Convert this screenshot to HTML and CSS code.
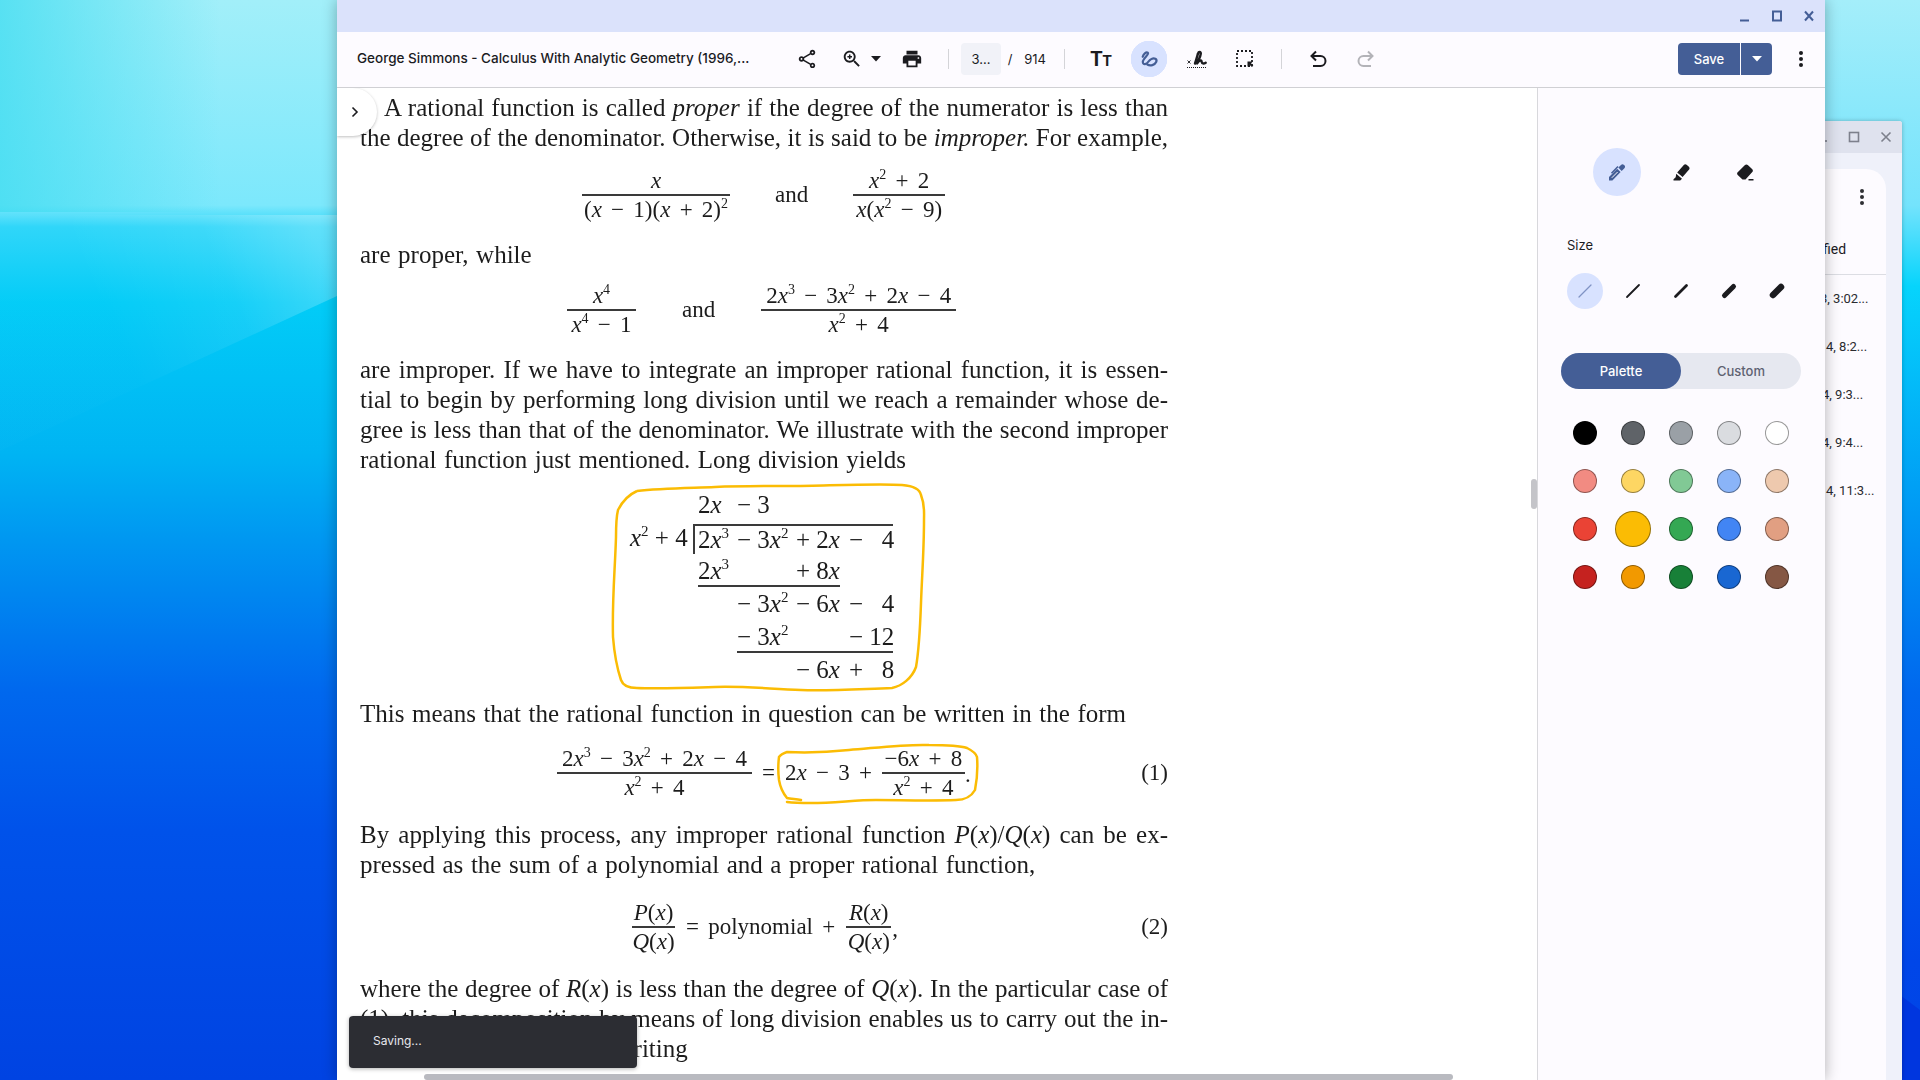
FILE: index.html
```html
<!DOCTYPE html>
<html lang="en">
<head>
  <meta charset="UTF-8" />
  <title>George Simmons - Calculus With Analytic Geometry</title>
  <link rel="stylesheet" href="styles.css">
</head>
<body>

<svg class="wallpaper" viewBox="0 0 1920 1080" width="1920" height="1080">
  <defs>
    <linearGradient id="wp-left" gradientUnits="userSpaceOnUse" x1="0" y1="0" x2="0" y2="1080">
      <stop offset="0" stop-color="#a2eff9"/>
      <stop offset=".19" stop-color="#7ce8fc"/>
      <stop offset=".21" stop-color="#2ed6f9"/>
      <stop offset=".28" stop-color="#02ccf7"/>
      <stop offset=".42" stop-color="#00b4f3"/>
      <stop offset=".50" stop-color="#0097f1"/>
      <stop offset=".64" stop-color="#0068ee"/>
      <stop offset=".77" stop-color="#0052ea"/>
      <stop offset="1" stop-color="#0043e2"/>
    </linearGradient>
    <linearGradient id="wp-fade" gradientUnits="userSpaceOnUse" x1="0" y1="0" x2="220" y2="0">
      <stop offset="0" stop-color="#3fdcf0" stop-opacity=".75"/>
      <stop offset="1" stop-color="#3fdcf0" stop-opacity="0"/>
    </linearGradient>
    <linearGradient id="wp-band" gradientUnits="userSpaceOnUse" x1="120" y1="340" x2="320" y2="250">
      <stop offset="0" stop-color="#fff" stop-opacity=".01"/>
      <stop offset=".55" stop-color="#fff" stop-opacity=".08"/>
      <stop offset="1" stop-color="#fff" stop-opacity=".24"/>
    </linearGradient>
    <linearGradient id="wp-right" gradientUnits="userSpaceOnUse" x1="0" y1="0" x2="0" y2="1080">
      <stop offset="0" stop-color="#a4eefa"/>
      <stop offset=".19" stop-color="#74e3fc"/>
      <stop offset=".265" stop-color="#06d4fc"/>
      <stop offset=".45" stop-color="#00a0f5"/>
      <stop offset=".64" stop-color="#0068ee"/>
      <stop offset=".89" stop-color="#0046e8"/>
      <stop offset="1" stop-color="#0044e6"/>
    </linearGradient>
  </defs>
  <rect width="1920" height="1080" fill="url(#wp-left)"/>
  <rect width="220" height="212" fill="url(#wp-fade)"/>
  <polygon points="0,215 337,215 337,296 0,451" fill="url(#wp-band)"/>
  <rect x="1825" width="95" height="1080" fill="url(#wp-right)"/>
  <polygon points="1880,980 1920,1010 1920,1080 1880,1080" fill="#0036df"/>
</svg>

<!-- window behind -->
<div class="back-window">
  <div class="back-titlebar">
    <span class="back-ctl"><svg width="12" height="12" viewBox="0 0 12 12"><path d="M1 10h10" class="back-stroke"/></svg></span>
    <span class="back-ctl"><svg width="12" height="12" viewBox="0 0 12 12"><rect x="1.5" y="1.5" width="9" height="9" class="back-stroke"/></svg></span>
    <span class="back-ctl"><svg width="12" height="12" viewBox="0 0 12 12"><path d="M1.5 1.5l9 9M10.5 1.5l-9 9" class="back-stroke"/></svg></span>
  </div>
  <div class="back-card">
    <div class="back-menu">
      <svg width="24" height="24" viewBox="0 0 24 24" fill="#2e2f33"><circle cx="12" cy="6" r="2"/><circle cx="12" cy="12" r="2"/><circle cx="12" cy="18" r="2"/></svg>
    </div>
    <div class="back-head">Last modified</div>
    <div class="back-row cut-more">3, 3:02...</div>
    <div class="back-row">4, 8:2...</div>
    <div class="back-row cut">4, 9:3...</div>
    <div class="back-row cut">4, 9:4...</div>
    <div class="back-row">4, 11:3...</div>
  </div>
</div>

<div class="window">
  <div class="titlebar">
    <span class="win-ctl"><svg width="12" height="12" viewBox="0 0 12 12"><path d="M1 10.5h9" class="win-stroke"/></svg></span>
    <span class="win-ctl"><svg width="12" height="12" viewBox="0 0 12 12"><rect x="2" y="1.5" width="8" height="9" class="win-stroke"/></svg></span>
    <span class="win-ctl"><svg width="12" height="12" viewBox="0 0 12 12"><path d="M2 1.5l8 9M10 1.5l-8 9" class="win-stroke"/></svg></span>
  </div>

  <div class="toolbar">
    <div class="doc-title">George Simmons - Calculus With Analytic Geometry (1996,...</div>

    <span class="tool">
      <svg width="22" height="22" viewBox="0 0 24 24"><path d="M18 16.08c-.76 0-1.44.3-1.96.77L8.91 12.7c.05-.23.09-.46.09-.7s-.04-.47-.09-.7l7.05-4.11c.54.5 1.25.81 2.04.81 1.66 0 3-1.34 3-3s-1.34-3-3-3-3 1.34-3 3c0 .24.04.47.09.7L8.04 9.81C7.5 9.31 6.79 9 6 9c-1.66 0-3 1.34-3 3s1.34 3 3 3c.79 0 1.5-.31 2.04-.81l7.12 4.16c-.05.21-.08.43-.08.65 0 1.61 1.31 2.92 2.92 2.92s2.92-1.31 2.92-2.92-1.31-2.92-2.92-2.92zM18 4c.55 0 1 .45 1 1s-.45 1-1 1-1-.45-1-1 .45-1 1-1zM6 13c-.55 0-1-.45-1-1s.45-1 1-1 1 .45 1 1-.45 1-1 1zm12 7.02c-.55 0-1-.45-1-1s.45-1 1-1 1 .45 1 1-.45 1-1 1z" fill="#1b1b1f"/></svg>
    </span>
    <span class="zoom-group">
      <svg width="22" height="22" viewBox="0 0 24 24"><path d="M15.5 14h-.79l-.28-.27C15.41 12.59 16 11.11 16 9.5 16 5.91 13.09 3 9.5 3S3 5.91 3 9.5 5.91 16 9.5 16c1.61 0 3.09-.59 4.23-1.57l.27.28v.79l5 4.99L20.49 19l-4.99-5zm-6 0C7.01 14 5 11.99 5 9.5S7.01 5 9.5 5 14 7.01 14 9.5 11.99 14 9.5 14zM12 10.3h-1.7V12H8.7v-1.7H7V8.7h1.7V7h1.6v1.7H12z" fill="#1b1b1f"/></svg>
      <svg class="caret" width="10" height="6" viewBox="0 0 10 6"><path d="M0 0h10L5 5.5z" fill="#1b1b1f"/></svg>
    </span>
    <span class="tool">
      <svg width="22" height="22" viewBox="0 0 24 24"><path d="M19 8H5c-1.66 0-3 1.34-3 3v6h4v4h12v-4h4v-6c0-1.66-1.34-3-3-3zm-3 11H8v-5h8v5zm3-7c-.55 0-1-.45-1-1s.45-1 1-1 1 .45 1 1-.45 1-1 1zm-1-9H6v4h12V3z" fill="#1b1b1f"/></svg>
    </span>

    <span class="divider"></span>
    <span class="page-input">3...</span>
    <span class="page-slash">/</span>
    <span class="page-total">914</span>
    <span class="divider"></span>

    <span class="tool text-tool"><span class="tt-big">T</span><span class="tt-small">T</span></span>
    <span class="tool active">
      <svg width="24" height="24" viewBox="0 0 24 24" fill="none"><path d="M5.7 9.8C6.5 7 9 4.8 10.8 5.7c1.800 1.200-5.300 6.300-5 9.300.3 3.300 3.700 2.500 5.700-.5 1.500-2.200 4.500-3.800 6.800-2.700 2.500 1.300.8 5.300-3 6.300-1.800.5-3.700.2-5-.6" stroke="#445e96" stroke-width="2.200" stroke-linecap="round" stroke-linejoin="round"/></svg>
    </span>
    <span class="tool">
      <svg width="24" height="24" viewBox="0 0 24 24" fill="none"><path d="M10 16.500C11.500 12 12.500 8 13 6.500c.6-2 3-2 2.800.2-.2 3-2.500 6.500-3.800 9.800M12.500 16c1-2 3.500-3.500 4-1.800.3 1.200.1 2.300 1.800 2.300 1 0 1.700-.3 2.400-.8" stroke="#1b1b1f" stroke-width="2.400" stroke-linecap="round" stroke-linejoin="round"/><path d="M2.500 13.500l3 3M5.500 13.500l-3 3" stroke="#1b1b1f" stroke-width=".9"/><path d="M2 20.500h19" stroke="#1b1b1f" stroke-width="1" stroke-dasharray="1 1"/></svg>
    </span>
    <span class="tool">
      <svg width="24" height="24" viewBox="0 0 24 24" fill="none"><rect x="4" y="4" width="15" height="15" stroke="#1b1b1f" stroke-width="1.8" stroke-dasharray="2 2"/><path d="M14.5 14.5H20l-2 1.800 2.300 2.400-1.400 1.400-2.400-2.300-2 2z" fill="#1b1b1f"/></svg>
    </span>

    <span class="divider"></span>

    <span class="tool">
      <svg width="24" height="24" viewBox="0 0 24 24" fill="none"><path d="M10 4.5 5.500 9l4.500 4.500M6 9h8.500a5 5 0 0 1 0 10H7" stroke="#1b1b1f" stroke-width="2"/></svg>
    </span>
    <span class="tool">
      <svg width="24" height="24" viewBox="0 0 24 24" fill="none"><path d="M14 4.5 18.500 9 14 13.500M18 9H9.500a5 5 0 0 0 0 10H17" stroke="#b3b3b8" stroke-width="2"/></svg>
    </span>

    <div class="save-group">
      <span class="save-btn">Save</span>
      <span class="save-arrow"><svg width="10" height="6" viewBox="0 0 10 6"><path d="M0 0h10L5 5.5z" fill="#fff"/></svg></span>
    </div>
    <span class="kebab">
      <svg width="24" height="24" viewBox="0 0 24 24" fill="#1b1b1f"><circle cx="12" cy="6" r="2"/><circle cx="12" cy="12" r="2"/><circle cx="12" cy="18" r="2"/></svg>
    </span>
  </div>

  <div class="viewer">
    <div class="doc-area">
      <div class="doc">
        <div class="ln just first">A rational function is called <i>proper</i> if the degree of the numerator is less than</div>
        <div class="ln just">the degree of the denominator. Otherwise, it is said to be <i>improper.</i> For example,</div>

        <div class="eq eq-a">
          <span class="frac w148"><span class="num"><i>x</i></span><span class="den">(<i>x</i> − 1)(<i>x</i> + 2)<sup>2</sup></span></span>
          <span class="word">and</span>
          <span class="frac w92"><span class="num"><i>x</i><sup>2</sup> + 2</span><span class="den"><i>x</i>(<i>x</i><sup>2</sup> − 9)</span></span>
        </div>

        <div class="ln">are proper, while</div>

        <div class="eq eq-b">
          <span class="frac w69"><span class="num"><i>x</i><sup>4</sup></span><span class="den"><i>x</i><sup>4</sup> − 1</span></span>
          <span class="word">and</span>
          <span class="frac w195"><span class="num">2<i>x</i><sup>3</sup> − 3<i>x</i><sup>2</sup> + 2<i>x</i> − 4</span><span class="den"><i>x</i><sup>2</sup> + 4</span></span>
        </div>

        <div class="ln just gap5">are improper. If we have to integrate an improper rational function, it is essen-</div>
        <div class="ln just">tial to begin by performing long division until we reach a remainder whose de-</div>
        <div class="ln just">gree is less than that of the denominator. We illustrate with the second improper</div>
        <div class="ln">rational function just mentioned. Long division yields</div>

        <div class="division">
          <span class="d-cell c2">2<i>x</i></span><span class="d-cell c3">− 3</span>
          <span class="d-cell c1 r2"><i>x</i><sup>2</sup> + 4</span>
          <span class="d-cell c2 r2 over first-over">2<i>x</i><sup>3</sup></span><span class="d-cell c3 r2 over">− 3<i>x</i><sup>2</sup></span><span class="d-cell c4 r2 over">+ 2<i>x</i></span><span class="d-cell c5 r2 over">− &nbsp;&nbsp;4</span>
          <span class="d-cell c2 r3 under">2<i>x</i><sup>3</sup></span><span class="d-cell c3 r3 under"></span><span class="d-cell c4 r3 under short">+ 8<i>x</i></span>
          <span class="d-cell c3 r4">− 3<i>x</i><sup>2</sup></span><span class="d-cell c4 r4">− 6<i>x</i></span><span class="d-cell c5 r4">− &nbsp;&nbsp;4</span>
          <span class="d-cell c3 r5 under">− 3<i>x</i><sup>2</sup></span><span class="d-cell c4 r5 under"></span><span class="d-cell c5 r5 under">− 12</span>
          <span class="d-cell c4 r6">− 6<i>x</i></span><span class="d-cell c5 r6">+ &nbsp;&nbsp;8</span>
        </div>

        <div class="ln gap10">This means that the rational function in question can be written in the form</div>

        <div class="eq eq-c">
          <span class="frac w195"><span class="num">2<i>x</i><sup>3</sup> − 3<i>x</i><sup>2</sup> + 2<i>x</i> − 4</span><span class="den"><i>x</i><sup>2</sup> + 4</span></span>
          <span class="word">=</span>
          <span class="word">2<i>x</i> − 3 +</span>
          <span class="frac w83"><span class="num">−6<i>x</i> + 8</span><span class="den"><i>x</i><sup>2</sup> + 4</span></span><span class="dot">.</span>
          <span class="eq-no">(1)</span>
        </div>

        <div class="ln just gap5">By applying this process, any improper rational function <i>P</i>(<i>x</i>)/<i>Q</i>(<i>x</i>) can be ex-</div>
        <div class="ln">pressed as the sum of a polynomial and a proper rational function,</div>

        <div class="eq eq-d gap5">
          <span class="frac w43"><span class="num"><i>P</i>(<i>x</i>)</span><span class="den"><i>Q</i>(<i>x</i>)</span></span>
          <span class="word">= polynomial +</span>
          <span class="frac w45"><span class="num"><i>R</i>(<i>x</i>)</span><span class="den"><i>Q</i>(<i>x</i>)</span></span><span class="dot">,</span>
          <span class="eq-no">(2)</span>
        </div>

        <div class="ln just gap5">where the degree of <i>R</i>(<i>x</i>) is less than the degree of <i>Q</i>(<i>x</i>). In the particular case of</div>
        <div class="ln just">(1), this decomposition by means of long division enables us to carry out the in-</div>
        <div class="ln plain">tegration of <i>P</i>(<i>x</i>)/<i>Q</i>(<i>x</i>) by writing</div>
      </div>

      <!-- highlighter marks drawn on the page -->
      <svg class="ink" viewBox="337 88 1200 992" width="1200" height="992" fill="none">
        <path d="M637 491C660 488 690 488 715 487S770 486 795 486 880 483 902 485C915 486 920 490 921 495 925 505 924 512 924 520 924 550 922 575 921 603S919 650 916 667C912 678 902 686 892 688 860 689 830 691 801 690 770 689 745 686 715 687S660 689 637 688C628 688 623 686 621 680 616 665 614 650 613 637 612 600 615 570 616 537 616 525 616 518 618 510 622 502 628 495 637 491" stroke="#fbbc04" stroke-width="2.5"/>
        <path d="M801 800C795 799 790 799 787 798 782 792 780 786 779 780 778 772 778 765 779 757 781 754 784 753 787 752 810 753 830 752 849 750 875 748 905 744 929 745 945 745 958 745 967 748 973 751 976 753 977 757 978 770 977 780 975 790 971 797 964 800 956 800 930 801 900 800 876 800 855 800 835 803 811 803 803 803 795 803 787 802" stroke="#fbbc04" stroke-width="2.5" stroke-linecap="round"/>
      </svg>

      <div class="side-tab">
        <svg width="12" height="12" viewBox="0 0 12 12" fill="none"><path d="M3.5 1.5 8 6l-4.500 4.500" stroke="#1b1b1f" stroke-width="1.6"/></svg>
      </div>
      <div class="h-scroll"></div>
      <div class="panel-scroll"></div>
      <div class="toast">Saving...</div>
    </div>

    <aside class="panel">
      <div class="pen-row">
        <span class="pen-btn selected">
          <svg width="24" height="24" viewBox="0 0 24 24" fill="#445e96"><path d="M4 20.500v-3.600l8.200-8.200 3.400 3.400-8.200 8.400z"/><path d="M13.300 7.600l2.700-2.700c.9-.9 2.200-.9 3 0l.4.400c.9.900.9 2.100 0 3l-2.700 2.700z"/><path d="M6.500 13.200 12 7.500l1-1" stroke="#445e96" stroke-width="1.5" fill="none"/><path d="M6.800 17.800l5.800-5.800" stroke="#fdfbff" stroke-width="1"/></svg>
        </span>
        <span class="pen-btn">
          <svg width="24" height="24" viewBox="0 0 24 24" fill="#1b1b1f"><path d="M8.200 12.500 14.800 5c.8-.9 2-.9 2.800-.2l2.300 2c.8.800.9 2 .2 2.800l-6.500 7.300z"/><path d="M7.200 13.800l5.800 5-1.800 1.700H4.500v-1.200l2.200-2.100z"/></svg>
        </span>
        <span class="pen-btn">
          <svg width="24" height="24" viewBox="0 0 24 24" fill="#1b1b1f"><path d="M9.500 19.500 4.700 15c-.8-.8-.8-2 0-2.700L12 5c.8-.8 2-.8 2.800 0l4.500 4.200c.8.800.8 2 0 2.800l-6.800 7.500z"/><path d="M15.500 19h5v1.500h-5z"/></svg>
        </span>
      </div>

      <div class="size-label">Size</div>
      <div class="size-row">
        <span class="size-btn selected"><svg width="24" height="24" viewBox="0 0 24 24"><path d="M6 18 18 6" stroke="#8093c4" stroke-width="1.3" stroke-linecap="round"/></svg></span>
        <span class="size-btn"><svg width="24" height="24" viewBox="0 0 24 24"><path d="M6 18 18 6" stroke="#1b1b1f" stroke-width="1.8" stroke-linecap="round"/></svg></span>
        <span class="size-btn"><svg width="24" height="24" viewBox="0 0 24 24"><path d="M6.500 17.500 17.500 6.500" stroke="#1b1b1f" stroke-width="2.8" stroke-linecap="round"/></svg></span>
        <span class="size-btn"><svg width="24" height="24" viewBox="0 0 24 24"><path d="M7.500 16.500 16.500 7.500" stroke="#1b1b1f" stroke-width="5" stroke-linecap="round"/></svg></span>
        <span class="size-btn"><svg width="24" height="24" viewBox="0 0 24 24"><path d="M8 16 16 8" stroke="#1b1b1f" stroke-width="6.5" stroke-linecap="round"/></svg></span>
      </div>

      <div class="toggle">
        <span class="toggle-opt on">Palette</span>
        <span class="toggle-opt">Custom</span>
      </div>

      <div class="swatches">
        <span class="swatch s-black"></span>
        <span class="swatch s-grey-1"></span>
        <span class="swatch s-grey-2"></span>
        <span class="swatch s-grey-3"></span>
        <span class="swatch s-white"></span>
        <span class="swatch s-red-l"></span>
        <span class="swatch s-yellow-l"></span>
        <span class="swatch s-green-l"></span>
        <span class="swatch s-blue-l"></span>
        <span class="swatch s-tan-l"></span>
        <span class="swatch s-red"></span>
        <span class="swatch s-yellow picked"></span>
        <span class="swatch s-green"></span>
        <span class="swatch s-blue"></span>
        <span class="swatch s-tan"></span>
        <span class="swatch s-red-d"></span>
        <span class="swatch s-yellow-d"></span>
        <span class="swatch s-green-d"></span>
        <span class="swatch s-blue-d"></span>
        <span class="swatch s-brown"></span>
      </div>
    </aside>
  </div>
</div>

</body>
</html>
```

FILE: styles.css
```css
body {
  margin: 0;
  width: 1920px;
  height: 1080px;
  overflow: hidden;
  position: relative;
  font-family: Inter, "Noto Sans", sans-serif;
  color: #1b1b1f;
  background: #0068ee;
}
.wallpaper {
  position: absolute;
  left: 0;
  top: 0;
}

/* window behind */
.back-window {
  position: absolute;
  left: 1700px;
  top: 121px;
  width: 202px;
  height: 959px;
  background: #eff1fa;
  border-radius: 3px 3px 0 0;
  box-shadow: 0 0 4px rgba(0,0,0,0.25);
}
.back-titlebar {
  height: 32px;
  background: #dfe2ee;
  display: flex;
  justify-content: flex-end;
  border-radius: 3px 3px 0 0;
}
.back-ctl {
  width: 32px;
  display: flex;
  align-items: center;
  justify-content: center;
}
.back-stroke {
  fill: none;
  stroke: #7d808c;
  stroke-width: 1.6;
}
.back-card {
  margin: 16px 16px 0 10px;
  height: 911px;
  background: #fdfbff;
  border-radius: 20px 20px 0 0;
}
.back-menu {
  display: flex;
  justify-content: flex-end;
  padding: 16px 12px 0 0;
}
.back-head {
  margin-top: 15px;
  height: 50px;
  line-height: 50px;
  padding-left: 51px;
  font-family: Roboto, sans-serif;
  font-size: 14px;
  border-bottom: 1px solid #dcdde3;
}
.back-row {
  height: 48px;
  line-height: 48px;
  padding-left: 116px;
  font-family: Roboto, sans-serif;
  font-size: 13px;
  color: #2a2b30;
  white-space: nowrap;
}
.back-row.cut {
  padding-left: 112px;
}
.back-row.cut-more {
  padding-left: 110px;
}

/* main window */
.window {
  position: absolute;
  left: 337px;
  top: 0;
  width: 1488px;
  height: 1080px;
  display: flex;
  flex-direction: column;
  background: #fdfbff;
  box-shadow: 0 0 14px rgba(0,0,0,0.3);
}
.titlebar {
  height: 32px;
  flex: none;
  background: #dbe2fb;
  display: flex;
  justify-content: flex-end;
}
.win-ctl {
  width: 32px;
  display: flex;
  align-items: center;
  justify-content: center;
}
.win-stroke {
  fill: none;
  stroke: #445e96;
  stroke-width: 2;
}

.toolbar {
  height: 54px;
  flex: none;
  display: flex;
  align-items: center;
  padding: 0 0 1px 20px;
  background: #fdfbff;
  border-bottom: 1px solid #d0d0d4;
}
.doc-title {
  width: 426px;
  margin-bottom: 2px;
  font-size: 13.5px;
  font-weight: 500;
  white-space: nowrap;
}
.tool {
  width: 48px;
  height: 36px;
  display: flex;
  align-items: center;
  justify-content: center;
}
.tool.active {
  background: radial-gradient(circle at center, #d8e2ff 18px, transparent 18.5px);
}
.zoom-group {
  width: 57px;
  display: flex;
  align-items: center;
  padding-left: 10px;
  box-sizing: border-box;
}
.caret {
  margin-left: 8px;
}
.divider {
  width: 1px;
  height: 20px;
  margin: 0 12px;
  background: #d4d4d8;
}
.page-input {
  width: 40px;
  height: 32px;
  line-height: 32px;
  text-align: center;
  font-size: 13px;
  background: #f1f2f8;
  border-radius: 4px;
}
.page-slash {
  width: 18px;
  text-align: center;
  font-size: 13px;
}
.page-total {
  width: 32px;
  text-align: center;
  font-size: 13px;
}
.page-total + .divider {
  margin-left: 13px;
}
.text-tool {
  align-items: baseline;
  line-height: 36px;
  font-family: Roboto, sans-serif;
  font-weight: 700;
}
.tt-big {
  font-size: 20px;
}
.tt-small {
  font-size: 15px;
}
.save-group {
  margin-left: auto;
  display: flex;
  height: 32px;
  color: #fff;
  font-size: 13px;
  font-weight: 500;
}
.save-btn {
  width: 62px;
  line-height: 32px;
  text-align: center;
  background: #445e96;
  border-radius: 4px 0 0 4px;
}
.save-arrow {
  width: 31px;
  margin-left: 1px;
  display: flex;
  align-items: center;
  justify-content: center;
  background: #445e96;
  border-radius: 0 4px 4px 0;
}
.kebab {
  width: 40px;
  margin: 0 4px 0 9px;
  display: flex;
  justify-content: center;
}

/* pdf area */
.viewer {
  flex: 1;
  display: flex;
  min-height: 0;
}
.doc-area {
  flex: 1;
  position: relative;
  overflow: hidden;
  background: #fff;
}
.doc {
  width: 808px;
  margin-left: 23px;
  padding-top: 5px;
  font-family: "Liberation Serif", "Times New Roman", serif;
  font-size: 25px;
  color: #1c1c1c;
  filter: blur(0.4px);
}
.doc sup {
  font-size: 15px;
  line-height: 0;
  vertical-align: 10px;
}
.ln {
  height: 30px;
  line-height: 30px;
  white-space: nowrap;
  word-spacing: 1.3px;
}
.ln.plain {
  word-spacing: 0;
}
.ln.just {
  white-space: normal;
  word-spacing: 0;
  text-align: justify;
  text-align-last: justify;
}
.ln.first {
  padding-left: 24px;
}
.gap5 {
  margin-top: 5px;
}
.gap10 {
  margin-top: 10px;
}
.eq {
  height: 84px;
  display: flex;
  align-items: center;
  font-size: 23px;
  word-spacing: 3.5px;
}
.eq sup {
  font-size: 14px;
  vertical-align: 9px;
}
.eq-a {
  padding-left: 222px;
  gap: 45px;
  margin-bottom: 3px;
}
.eq-b {
  height: 80px;
  padding-left: 207px;
  gap: 46px;
}
.eq-c {
  margin-top: 2px;
  padding-left: 197px;
  gap: 10px;
}
.eq-d {
  padding-left: 272px;
  gap: 11px;
}
.frac {
  display: flex;
  flex-direction: column;
  text-align: center;
  flex: none;
  white-space: nowrap;
}
.num {
  height: 28px;
  line-height: 30px;
}
.den {
  height: 28px;
  line-height: 28px;
  border-top: 2px solid #3a3a3a;
}
.w43 { width: 43px; }
.w45 { width: 45px; }
.w69 { width: 69px; }
.w83 { width: 83px; }
.w92 { width: 92px; }
.w148 { width: 148px; }
.w195 { width: 195px; }
.word {
  white-space: nowrap;
}
.dot {
  margin-left: -10px;
  padding-top: 4px;
}
.eq-no {
  margin-left: auto;
}

/* long division, columns follow the terms of the polynomial */
.division {
  margin: 16px 0 0 270px;
  display: grid;
  grid-template-columns: 68px 39px 59px 53px 44px;
  grid-auto-rows: 33px;
  align-items: start;
  white-space: nowrap;
}
.d-cell {
  height: 28px;
  line-height: 28px;
  grid-row: 1;
}
.c1 { grid-column: 1; }
.c2 { grid-column: 2; }
.c3 { grid-column: 3; }
.c4 { grid-column: 4; }
.c5 { grid-column: 5; }
.r2 { grid-row: 2; }
.r3 { grid-row: 3; }
.r4 { grid-row: 4; }
.r5 { grid-row: 5; }
.r6 { grid-row: 6; }
.over {
  border-top: 2px solid #3a3a3a;
}
.first-over {
  margin-left: -5px;
  padding-left: 3px;
  border-left: 2px solid #3a3a3a;
}
.under {
  border-bottom: 2px solid #3a3a3a;
}
.short {
  margin-right: 9px;
}
.ink {
  position: absolute;
  left: 0;
  top: 0;
}
.side-tab {
  position: absolute;
  left: 0;
  top: 0;
  width: 40px;
  height: 48px;
  display: flex;
  align-items: center;
  justify-content: center;
  padding-right: 4px;
  box-sizing: border-box;
  background: #fff;
  border-radius: 0 24px 24px 0;
  box-shadow: 0 1px 3px rgba(0,0,0,0.25);
}
.h-scroll {
  position: absolute;
  left: 87px;
  bottom: 0;
  width: 1029px;
  height: 6px;
  background: #b9bac0;
  border-radius: 3px;
}
.panel-scroll {
  position: absolute;
  right: 0;
  top: 391px;
  width: 6px;
  height: 30px;
  background: #c4c4c9;
  border-radius: 3px;
}
.toast {
  position: absolute;
  left: 12px;
  top: 928px;
  width: 264px;
  height: 52px;
  line-height: 50px;
  padding-left: 24px;
  font-size: 12px;
  color: #e8e8ee;
  background: #2c2d33;
  border-radius: 4px;
  box-shadow: 0 1px 4px rgba(0,0,0,0.3);
}

/* annotation panel */
.panel {
  width: 288px;
  flex: none;
  box-sizing: border-box;
  padding: 60px 0 0 23px;
  background: #fdfbff;
  border-left: 1px solid #d8d8dc;
}
.pen-row {
  width: 240px;
  display: flex;
  justify-content: center;
  gap: 16px;
}
.pen-btn {
  width: 48px;
  height: 48px;
  display: flex;
  align-items: center;
  justify-content: center;
  border-radius: 50%;
}
.pen-btn.selected,
.size-btn.selected {
  background: #d8e2ff;
}
.size-label {
  margin: 39px 0 0 6px;
  height: 20px;
  line-height: 20px;
  font-size: 13px;
}
.size-row {
  margin-top: 18px;
  width: 240px;
  display: grid;
  grid-template-columns: repeat(5, 48px);
  justify-items: center;
}
.size-btn {
  width: 36px;
  height: 36px;
  display: flex;
  align-items: center;
  justify-content: center;
  border-radius: 50%;
}
.toggle {
  margin-top: 44px;
  width: 240px;
  height: 36px;
  display: flex;
  background: #e6e8f0;
  border-radius: 18px;
}
.toggle-opt {
  flex: 1;
  line-height: 36px;
  text-align: center;
  font-size: 13px;
  font-weight: 500;
  color: #5e6272;
  border-radius: 18px;
}
.toggle-opt.on {
  background: #445e96;
  color: #fff;
}
.swatches {
  margin-top: 20px;
  width: 240px;
  display: grid;
  grid-template-columns: repeat(5, 48px);
  grid-auto-rows: 48px;
  place-items: center;
}
.swatch {
  width: 24px;
  height: 24px;
  box-sizing: border-box;
  border-radius: 50%;
  border: 1px solid rgba(0,0,0,0.4);
}
.swatch.picked {
  width: 36px;
  height: 36px;
}
.s-black { background: #000; }
.s-grey-1 { background: #5f6368; }
.s-grey-2 { background: #9aa0a6; }
.s-grey-3 { background: #dadce0; }
.s-white { background: #fff; }
.s-red-l { background: #f28b82; }
.s-yellow-l { background: #fdd663; }
.s-green-l { background: #81c995; }
.s-blue-l { background: #8ab4f8; }
.s-tan-l { background: #eec9ae; }
.s-red { background: #ea4335; }
.s-yellow { background: #fbbc04; }
.s-green { background: #34a853; }
.s-blue { background: #4285f4; }
.s-tan { background: #e19f82; }
.s-red-d { background: #c5221f; }
.s-yellow-d { background: #f29900; }
.s-green-d { background: #188038; }
.s-blue-d { background: #1967d2; }
.s-brown { background: #855744; }
```
